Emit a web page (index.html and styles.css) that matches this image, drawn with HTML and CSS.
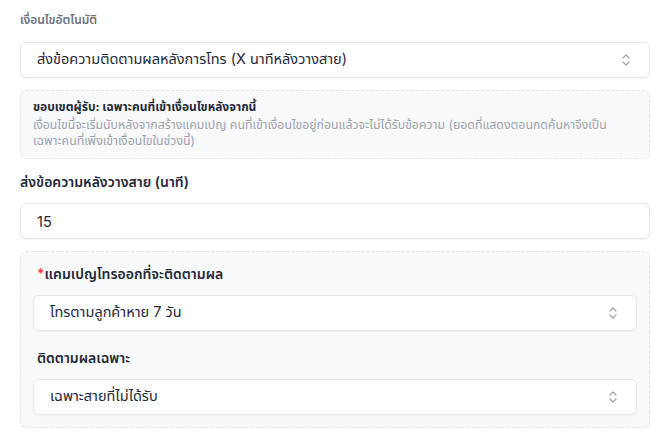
FILE: index.html
```html
<!DOCTYPE html>
<html>
    <head>
        <title>เงื่อนไขอัตโนมัติ</title>
        <link rel="stylesheet" href="styles.css">
    </head>
    <body>
        <div class="form">
            <div class="section-title">เงื่อนไขอัตโนมัติ</div>
            <div class="select">
                <span>ส่งข้อความติดตามผลหลังการโทร (X นาทีหลังวางสาย)</span>
                <svg class="chevron" width="10" height="14" viewBox="0 0 10 14"><path d="M2 5l3-3 3 3M2 9l3 3 3-3" fill="none" stroke="#9ca3af" stroke-width="1.2" stroke-linecap="round" stroke-linejoin="round"/></svg>
            </div>

            <div class="note">
                <div class="note-title">ขอบเขตผู้รับ: เฉพาะคนที่เข้าเงื่อนไขหลังจากนี้</div>
                <div class="note-text">เงื่อนไขนี้จะเริ่มนับหลังจากสร้างแคมเปญ คนที่เข้าเงื่อนไขอยู่ก่อนแล้วจะไม่ได้รับข้อความ (ยอดที่แสดงตอนกดค้นหาจึงเป็น<br>เฉพาะคนที่เพิ่งเข้าเงื่อนไขในช่วงนี้)</div>
            </div>

            <label class="field-label">ส่งข้อความหลังวางสาย (นาที)</label>
            <div class="input">15</div>

            <div class="group">
                <label class="field-label"><span class="req">*</span>แคมเปญโทรออกที่จะติดตามผล</label>
                <div class="select">
                    <span>โทรตามลูกค้าหาย 7 วัน</span>
                    <svg class="chevron" width="10" height="14" viewBox="0 0 10 14"><path d="M2 5l3-3 3 3M2 9l3 3 3-3" fill="none" stroke="#9ca3af" stroke-width="1.2" stroke-linecap="round" stroke-linejoin="round"/></svg>
                </div>

                <label class="field-label">ติดตามผลเฉพาะ</label>
                <div class="select">
                    <span>เฉพาะสายที่ไม่ได้รับ</span>
                    <svg class="chevron" width="10" height="14" viewBox="0 0 10 14"><path d="M2 5l3-3 3 3M2 9l3 3 3-3" fill="none" stroke="#9ca3af" stroke-width="1.2" stroke-linecap="round" stroke-linejoin="round"/></svg>
                </div>
            </div>
        </div>
    </body>
</html>
```

FILE: styles.css
```css
body {
    margin: 0;
    background: #fff;
    font-family: Inter, "Noto Sans Thai", "Noto Sans Thai UI", "Noto Sans", sans-serif;
    color: #1f2937;
}
.form {
    display: flex;
    flex-direction: column;
    padding: 10px 20px 0 20px;
}
.section-title {
    font-size: 12px;
    font-weight: 600;
    color: #6b7280;
    line-height: 20px;
    margin-bottom: 12px;
}
.select, .input {
    display: flex;
    align-items: center;
    justify-content: space-between;
    height: 36px;
    box-sizing: border-box;
    padding: 0 18px 0 16px;
    background: #fff;
    border: 1px solid #e5e7eb;
    border-radius: 6px;
    box-shadow: 0 1px 1px rgba(0, 0, 0, 0.04);
    font-size: 14.5px;
}
.chevron {
    flex: none;
}
.note {
    margin-top: 12px;
    padding: 8px 10px 9px 12px;
    background: #f8f9fa;
    border: 1px dashed #e3e5e8;
    border-radius: 6px;
    font-size: 12.3px;
    line-height: 16px;
}
.note-title {
    font-weight: 700;
    font-size: 12px;
    color: #1f2937;
    margin-bottom: 2px;
}
.note-text {
    color: #9ca3af;
}
.field-label {
    display: block;
    font-size: 14px;
    font-weight: 600;
    line-height: 20px;
    margin: 13px 0 11px 0;
}
.req {
    color: #ef4444;
}
.group {
    margin-top: 12px;
    padding: 0 12px 12px 12px;
    background: #f8f9fa;
    border: 1px dashed #e3e5e8;
    border-radius: 6px;
}
.group .field-label {
    margin: 12px 0 11px 4px;
}
.group .select + .field-label {
    margin-top: 17px;
}
```
